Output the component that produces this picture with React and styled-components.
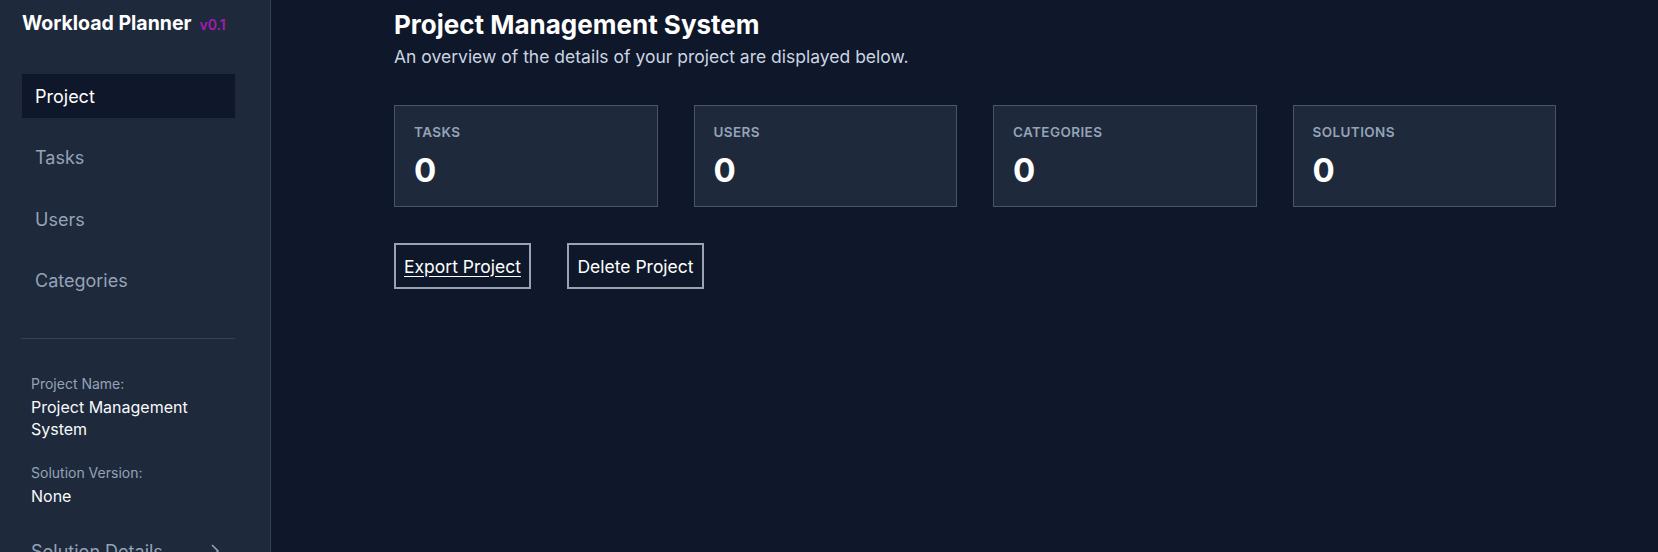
import React from 'react';
import styled, { createGlobalStyle } from 'styled-components';

const GlobalStyle = createGlobalStyle`
  * { box-sizing: border-box; }
  html, body {
    margin: 0;
    padding: 0;
    background: #0f172a;
    font-family: Inter, "Noto Sans", sans-serif;
    color: #f8fafc;
  }
`;

const Layout = styled.div`
  display: flex;
  height: 100vh;
  overflow: hidden;
  background: #0f172a;
`;

const Sidebar = styled.aside`
  width: 271px;
  flex-shrink: 0;
  background: #1e293b;
  border-right: 1px solid #334155;
  padding: 10px 35px 0 22px;
  display: flex;
  flex-direction: column;
`;

const Brand = styled.div`
  display: flex;
  align-items: baseline;
  gap: 8px;
  height: 24px;
`;

const BrandName = styled.span`
  font-size: 19.5px;
  font-weight: 700;
  color: #ffffff;
  line-height: 26px;
`;

const Version = styled.span`
  font-size: 14px;
  font-weight: 600;
  color: #a21caf;
`;

const Nav = styled.nav`
  margin-top: 40px;
  display: flex;
  flex-direction: column;
  gap: 17.5px;
`;

const NavItem = styled.a`
  display: flex;
  align-items: center;
  height: 44px;
  padding: 0 13px;
  font-size: 18px;
  text-decoration: none;
  color: ${p => (p.$active ? '#ffffff' : '#94a3b8')};
  background: ${p => (p.$active ? '#0f172a' : 'transparent')};
  cursor: pointer;
`;

const Divider = styled.hr`
  border: none;
  border-top: 1px solid #334155;
  margin: 35px 0 0 -1px;
`;

const Info = styled.div`
  margin-top: 35px;
  padding: 0 10px 0 9px;
  display: flex;
  flex-direction: column;
  gap: 23px;
`;

const Field = styled.div`
  display: flex;
  flex-direction: column;
  gap: 2px;
`;

const FieldLabel = styled.span`
  font-size: 14px;
  line-height: 20px;
  color: #94a3b8;
`;

const FieldValue = styled.span`
  font-size: 16px;
  line-height: 22px;
  color: #f8fafc;
`;

const DetailsRow = styled.div`
  margin-top: 34px;
  padding: 0 15px 0 9px;
  display: flex;
  align-items: center;
  justify-content: space-between;
  font-size: 18px;
  color: #94a3b8;
`;

const Main = styled.main`
  flex: 1;
  padding: 9px 102px 0 123px;
`;

const Title = styled.h1`
  margin: 0;
  font-size: 26px;
  line-height: 32px;
  font-weight: 700;
  color: #ffffff;
`;

const Subtitle = styled.p`
  margin: 4px 0 0;
  font-size: 17.5px;
  line-height: 24px;
  color: #cbd5e1;
`;

const Stats = styled.div`
  margin-top: 36px;
  display: grid;
  grid-template-columns: repeat(4, 1fr);
  gap: 36px;
`;

const StatCard = styled.div`
  height: 102px;
  background: #1e293b;
  border: 1px solid #475569;
  padding: 17px 19px;
`;

const StatLabel = styled.div`
  font-size: 13.5px;
  font-weight: 600;
  letter-spacing: 0.4px;
  color: #94a3b8;
  line-height: 18px;
`;

const StatValue = styled.div`
  margin-top: 9px;
  font-size: 33px;
  font-weight: 700;
  line-height: 40px;
  color: #ffffff;
`;

const Actions = styled.div`
  margin-top: 36px;
  display: flex;
  gap: 36px;
`;

const ActionButton = styled.button`
  height: 46px;
  width: 137px;
  padding: 0;
  background: #0f172a;
  border: 2px solid #9aa3b0;
  color: #ffffff;
  font-family: inherit;
  font-size: 17.5px;
  text-decoration: ${p => (p.$hover ? 'underline' : 'none')};
  text-underline-offset: 3px;
  cursor: pointer;
`;

const stats = [
  { label: 'TASKS', value: 0 },
  { label: 'USERS', value: 0 },
  { label: 'CATEGORIES', value: 0 },
  { label: 'SOLUTIONS', value: 0 },
];

export default function App() {
  return (
    <>
      <GlobalStyle />
      <Layout>
        <Sidebar>
          <Brand>
            <BrandName>Workload Planner</BrandName>
            <Version>v0.1</Version>
          </Brand>
          <Nav>
            <NavItem $active>Project</NavItem>
            <NavItem>Tasks</NavItem>
            <NavItem>Users</NavItem>
            <NavItem>Categories</NavItem>
          </Nav>
          <Divider />
          <Info>
            <Field>
              <FieldLabel>Project Name:</FieldLabel>
              <FieldValue>Project Management System</FieldValue>
            </Field>
            <Field>
              <FieldLabel>Solution Version:</FieldLabel>
              <FieldValue>None</FieldValue>
            </Field>
          </Info>
          <DetailsRow>
            <span>Solution Details</span>
            <svg width="10" height="16" viewBox="0 0 10 16" fill="none" stroke="#94a3b8" strokeWidth="1.6">
              <path d="M2 2l6 6-6 6" />
            </svg>
          </DetailsRow>
        </Sidebar>
        <Main>
          <Title>Project Management System</Title>
          <Subtitle>An overview of the details of your project are displayed below.</Subtitle>
          <Stats>
            {stats.map(s => (
              <StatCard key={s.label}>
                <StatLabel>{s.label}</StatLabel>
                <StatValue>{s.value}</StatValue>
              </StatCard>
            ))}
          </Stats>
          <Actions>
            <ActionButton $hover>Export Project</ActionButton>
            <ActionButton>Delete Project</ActionButton>
          </Actions>
        </Main>
      </Layout>
    </>
  );
}
